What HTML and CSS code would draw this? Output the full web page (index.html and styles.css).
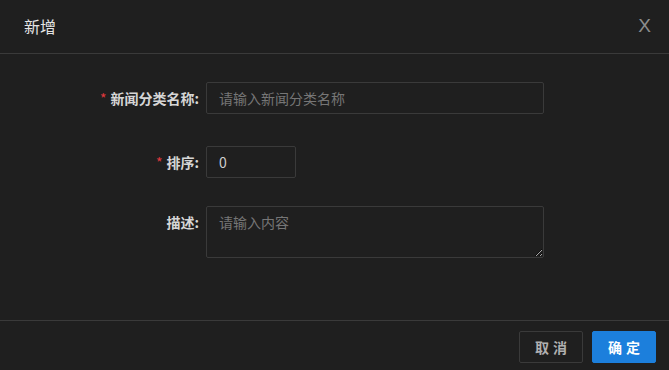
FILE: index.html
```html
<!DOCTYPE html>
<html lang="zh-CN">
<head>
  <meta charset="UTF-8">
  <title>新增</title>
  <link rel="stylesheet" href="styles.css">
</head>
<body>
  <div class="dialog">
    <header class="dialog-header">
      <span class="dialog-title">新增</span>
      <span class="dialog-close">X</span>
    </header>
    <main class="dialog-body">
      <form class="form">
        <div class="form-item item-name">
          <label class="form-label"><span class="required">*</span>新闻分类名称:</label>
          <input class="input input-wide" type="text" placeholder="请输入新闻分类名称">
        </div>
        <div class="form-item item-sort">
          <label class="form-label"><span class="required">*</span>排序:</label>
          <input class="input input-short" type="text" value="0">
        </div>
        <div class="form-item">
          <label class="form-label">描述:</label>
          <textarea class="input textarea" placeholder="请输入内容"></textarea>
        </div>
      </form>
    </main>
    <footer class="dialog-footer">
      <button class="btn btn-cancel" type="button">取消</button>
      <button class="btn btn-primary" type="button">确定</button>
    </footer>
  </div>
</body>
</html>
```

FILE: styles.css
```css
* {
  margin: 0;
  padding: 0;
  box-sizing: border-box;
}
html, body {
  height: 100%;
}
body {
  background-color: #1f1f1f;
  color: #dcdcdc;
  font-family: "Noto Sans CJK SC", "Noto Sans", sans-serif;
}
.dialog {
  display: flex;
  flex-direction: column;
  height: 370px;
}
.dialog-header {
  display: flex;
  justify-content: space-between;
  align-items: center;
  height: 54px;
  padding: 0 18px 1px 24px;
  border-bottom: 1px solid #3a3a3a;
}
.dialog-title {
  font-size: 16px;
  color: #e4e4e4;
}
.dialog-close {
  font-family: "Liberation Sans", sans-serif;
  font-size: 19px;
  color: #8c8c8c;
}
.dialog-body {
  flex: 1;
  padding-top: 28px;
}
.form-item {
  display: flex;
  align-items: flex-start;
  margin-bottom: 28px;
}
.item-name {
  margin-bottom: 32px;
}
.form-label {
  width: 200px;
  line-height: 32px;
  margin-right: 6px;
  padding-right: 1px;
  text-align: right;
  font-size: 14px;
  font-weight: bold;
  color: #d6d6d6;
}
.required {
  color: #e0393e;
  margin-right: 4px;
  font-weight: normal;
}
.input {
  height: 32px;
  padding: 0 12px;
  background-color: #1f1f1f;
  border: 1px solid #3a3a3a;
  border-radius: 2px;
  color: #cfcfcf;
  font-family: inherit;
  font-size: 14px;
  outline: none;
}
.input::placeholder {
  color: #767676;
}
.input-wide {
  width: 338px;
}
.input-short {
  width: 90px;
}
.textarea {
  width: 338px;
  height: 52px;
  padding: 5px 12px;
  line-height: 20px;
  resize: vertical;
}
.dialog-footer {
  display: flex;
  justify-content: flex-end;
  gap: 9px;
  height: 50px;
  padding: 10px 13px 0 0;
  border-top: 1px solid #3a3a3a;
}
.btn {
  width: 64px;
  height: 32px;
  border-radius: 2px;
  font-family: inherit;
  font-size: 14px;
  font-weight: bold;
  letter-spacing: 4px;
  text-indent: 4px;
  cursor: pointer;
}
.btn-cancel {
  background-color: #1f1f1f;
  border: 1px solid #3a3a3a;
  color: #b0b0b0;
}
.btn-primary {
  background-color: #1c7fdc;
  border: 1px solid #1c7fdc;
  color: #ffffff;
}
```
